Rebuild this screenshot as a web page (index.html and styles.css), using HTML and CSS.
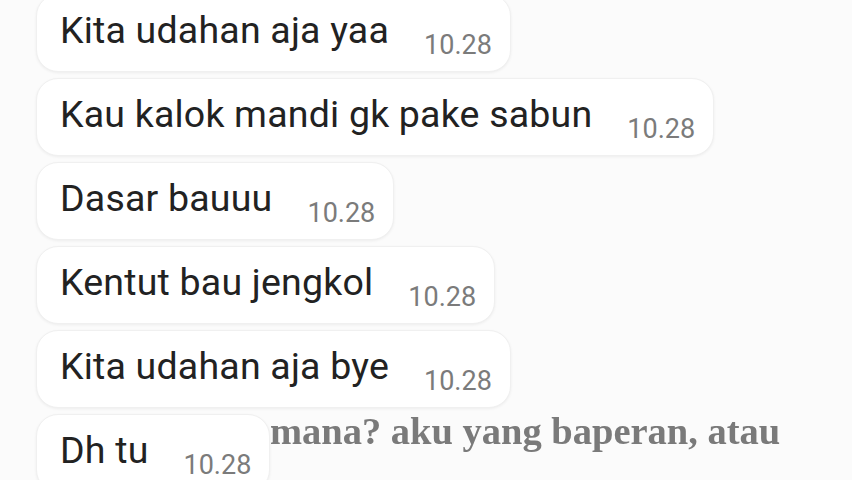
FILE: index.html
```html
<!DOCTYPE html>
<html lang="id">
<head>
    <meta charset="UTF-8">
    <meta name="viewport" content="width=device-width, initial-scale=1.0">
    <title>Chat</title>
    <link rel="stylesheet" href="styles.css">
</head>
<body>
    <div class="chat">
        <div class="msg">
            <div class="bubble">
                <span class="text">Kita udahan aja yaa</span>
                <span class="time">10.28</span>
            </div>
        </div>
        <div class="msg">
            <div class="bubble">
                <span class="text">Kau kalok mandi gk pake sabun</span>
                <span class="time">10.28</span>
            </div>
        </div>
        <div class="msg">
            <div class="bubble">
                <span class="text">Dasar bauuu</span>
                <span class="time">10.28</span>
            </div>
        </div>
        <div class="msg">
            <div class="bubble">
                <span class="text">Kentut bau jengkol</span>
                <span class="time">10.28</span>
            </div>
        </div>
        <div class="msg">
            <div class="bubble">
                <span class="text">Kita udahan aja bye</span>
                <span class="time">10.28</span>
            </div>
        </div>
        <div class="msg">
            <div class="bubble">
                <span class="text">Dh tu</span>
                <span class="time">10.28</span>
            </div>
        </div>
    </div>

    <!-- caption burned into the video -->
    <div class="caption">mana? aku yang baperan, atau</div>
</body>
</html>
```

FILE: styles.css
```css
* {
    margin: 0;
    padding: 0;
    box-sizing: border-box;
}

body {
    background: #fbfbfb;
    font-family: 'Roboto', 'Liberation Sans', sans-serif;
    width: 852px;
    height: 480px;
    overflow: hidden;
    position: relative;
}

.chat {
    display: flex;
    flex-direction: column;
    gap: 6px;
    padding: 0 0 0 36px;
    margin-top: -6px;
}

.msg {
    display: flex;
}

.bubble {
    display: flex;
    align-items: flex-end;
    gap: 35px;
    height: 78px;
    padding: 0 18px 12px 23px;
    background: #ffffff;
    border: 1px solid #f0f0f0;
    border-radius: 22px;
    box-shadow: 0 1px 3px rgba(0, 0, 0, 0.06);
}

.text {
    font-size: 37.5px;
    letter-spacing: 0.2px;
    color: #222222;
    line-height: 1;
    margin-bottom: 10px;
}

.time {
    font-size: 27px;
    color: #7b7b7b;
    line-height: 1;
}

.caption {
    position: absolute;
    left: 270px;
    top: 409px;
    font-family: 'Liberation Serif', serif;
    font-weight: bold;
    font-size: 38.5px;
    color: #7a7a7a;
    white-space: nowrap;
    filter: blur(0.4px);
}
```
